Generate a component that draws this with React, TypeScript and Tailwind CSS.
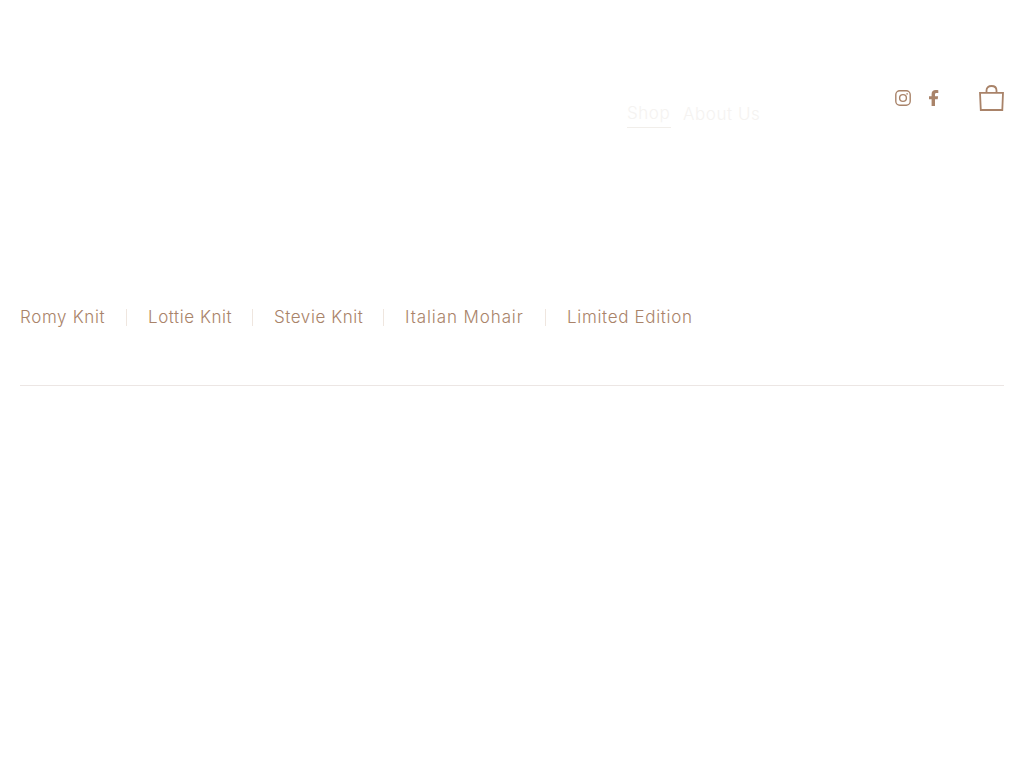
import React from 'react';

const categories = [
  { name: 'Romy Knit', className: 'w-[85px] tracking-[0.64px]' },
  { name: 'Lottie Knit', className: 'w-[83px] tracking-[0.56px]' },
  { name: 'Stevie Knit', className: 'w-[88px] tracking-[0.56px]' },
  { name: 'Italian Mohair', className: 'w-[119px] tracking-[0.9px]' },
  { name: 'Limited Edition', className: 'w-[125px] tracking-[0.67px]' },
];

const InstagramIcon = () => (
  <svg width="16" height="16" viewBox="0 0 16 16" fill="none" stroke="#a98369" strokeWidth="1.4">
    <rect x="0.8" y="0.8" width="14.4" height="14.4" rx="4" />
    <circle cx="8" cy="8" r="3.4" />
    <circle cx="12.1" cy="3.9" r="0.8" fill="#a98369" stroke="none" />
  </svg>
);

const FacebookIcon = () => (
  <svg width="10" height="16" viewBox="0 0 10 16" fill="#a98369">
    <path d="M2.6 16V9.2H0V6.2H2.6V4C2.6 1.4 4.2 0 6.6 0c1.1 0 2.1.1 2.7.2v2.7H7.6c-1.3 0-1.6.6-1.6 1.5v1.8h3.1L8.7 9.2H6V16H2.6z" />
  </svg>
);

const BagIcon = () => (
  <svg width="25" height="26" viewBox="0 0 25 26" fill="none" stroke="#a98369" strokeWidth="1.8">
    <path d="M1 7.8H24L23.3 25H1.8L1 7.8Z" />
    <path d="M7.5 7.4V5.4C7.5 2.6 9.4 1 12.5 1C15.6 1 17.5 2.6 17.5 5.4V7.4" />
  </svg>
);

const App: React.FC = () => {
  return (
    <div className="min-h-[768px] bg-white font-['Inter',sans-serif]">
      <header className="flex h-[170px] items-start pt-[85px] pl-[627px] pr-5">
        <nav className="flex gap-[12px] pt-[15px] text-[17px] leading-[27px] tracking-[0.56px] font-light text-[#f5f3f1]">
          <a className="w-[44px] border-b border-[#f1eeea] whitespace-nowrap">Shop</a>
          <a className="mt-px whitespace-nowrap">About Us</a>
        </nav>
        <div className="ml-auto flex items-center">
          <InstagramIcon />
          <span className="ml-[18px] mr-[40px]"><FacebookIcon /></span>
          <BagIcon />
        </div>
      </header>
      <div className="mx-5 mt-[134px] flex h-[82px] items-start border-b border-[#ece6e4] text-[17px] leading-[27px] text-[#a98369]">
        {categories.map((item, i) => (
          <React.Fragment key={item.name}>
            {i > 0 && <span className="mx-[21px] mt-[5px] h-[17px] w-[1px] bg-[#efe6df]" />}
            <a className={`${item.className} font-light whitespace-nowrap`}>{item.name}</a>
          </React.Fragment>
        ))}
      </div>
    </div>
  );
};

export default App;
